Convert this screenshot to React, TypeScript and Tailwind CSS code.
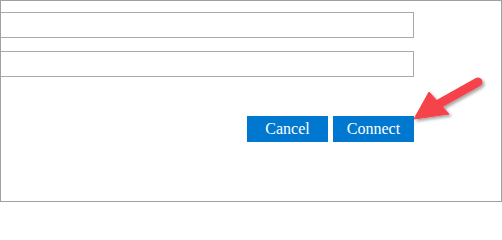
export default function App() {
  return (
    <div className="relative w-[502px] h-[202px] overflow-hidden border border-[#a0a0a0] bg-white">
      <div className="flex flex-col pt-[11px] pr-[87px]">
        <input
          type="text"
          className="ml-[-10px] h-[26px] border border-[#a9a9a9] bg-white outline-none"
        />
        <input
          type="text"
          className="ml-[-10px] mt-[13px] h-[26px] border border-[#a9a9a9] bg-white outline-none"
        />
        <div className="mt-[39px] flex justify-end gap-[5px]">
          <button
            className="w-[81px] h-[26px] bg-[#0078d0] text-white text-[16px] leading-none"
            style={{ fontFamily: '"Liberation Serif", "Times New Roman", serif' }}
          >
            Cancel
          </button>
          <button
            className="w-[81px] h-[26px] bg-[#0078d0] text-white text-[16px] leading-none"
            style={{ fontFamily: '"Liberation Serif", "Times New Roman", serif' }}
          >
            Connect
          </button>
        </div>
      </div>

      {/* annotation arrow pointing at Connect */}
      <svg
        className="absolute left-0 top-0 pointer-events-none"
        width="502"
        height="202"
        viewBox="0 0 502 202"
      >
        <defs>
          <filter id="sh" x="-20%" y="-20%" width="140%" height="140%">
            <feDropShadow dx="2" dy="2" stdDeviation="1.5" floodColor="#000" floodOpacity="0.35" />
          </filter>
        </defs>
        <g filter="url(#sh)" fill="#f5434b" stroke="#f5434b">
          <line x1="477" y1="81" x2="436" y2="104" strokeWidth="9" strokeLinecap="round" />
          <polygon points="413,118 428,91 448,113" strokeWidth="1" strokeLinejoin="round" />
        </g>
      </svg>
    </div>
  );
}
